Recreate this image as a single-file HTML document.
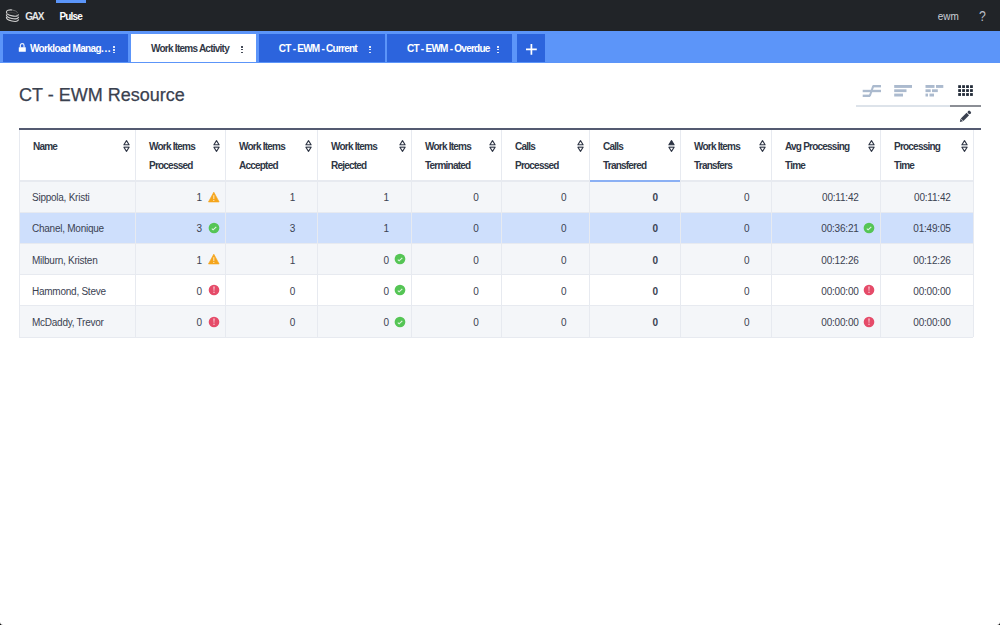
<!DOCTYPE html><html><head><meta charset="utf-8"><style>
html,body{margin:0;padding:0;width:1000px;height:625px;overflow:hidden;background:#fff;font-family:"Liberation Sans", sans-serif;}
.t{position:absolute;white-space:nowrap;}
.b{position:absolute;}
svg{position:absolute;}
</style></head><body>
<div class="b" style="left:0px;top:0px;width:1000.00px;height:31.25px;background:#212428;"></div>
<div class="b" style="left:56px;top:0px;width:30.00px;height:2.50px;background:#5b95f9;"></div>
<svg style="left:0;top:0" width="25" height="30" viewBox="0 0 25 30">
<g fill="none" stroke="#d0d0d0" stroke-width="1.1">
<g transform="rotate(12 12.5 13)">
<path d="M11.5 10.1 A6.2 2.9 0 1 0 18.7 13"/>
<path d="M11.5 10.1 A6.2 2.9 0 0 1 17.5 11.6" stroke="#6a6a6a" stroke-width="0.9"/>
</g>
<g transform="translate(0 2.6)"><g transform="rotate(12 12.5 13)">
<path d="M6.3 13 A6.2 2.9 0 0 1 18.7 13" stroke="#4a4a4a" stroke-width="0.6"/>
<path d="M6.3 13 A6.2 2.9 0 0 0 18.7 13"/></g></g>
<g transform="translate(0 5.2)"><g transform="rotate(12 12.5 13)">
<path d="M6.3 13 A6.2 2.9 0 0 0 18.7 13"/></g></g>
</g></svg>
<div class="t" style="left:25.20px;top:11.54px;font-size:10px;line-height:10px;font-weight:bold;color:#e6e6e6;letter-spacing:-1.25px;">GAX</div>
<div class="t" style="left:59.40px;top:11.73px;font-size:10px;line-height:10px;font-weight:bold;color:#ffffff;letter-spacing:-0.8px;">Pulse</div>
<div class="t" style="left:937.80px;top:12.34px;font-size:10px;line-height:10px;font-weight:normal;color:#c9ced6;">ewm</div>
<div class="t" style="left:978.60px;top:8.20px;font-size:15px;line-height:15px;font-weight:normal;color:#b9bec7;transform:scaleX(0.82);transform-origin:0 0;">?</div>
<div class="b" style="left:0px;top:31.25px;width:1000.00px;height:31.25px;background:#5c95f9;"></div>
<div class="b" style="left:3px;top:34px;width:125.00px;height:28.20px;background:#2c64dd;"></div>
<div class="b" style="left:131px;top:34px;width:125.00px;height:28.20px;background:#ffffff;"></div>
<div class="b" style="left:259px;top:34px;width:125.50px;height:28.20px;background:#2c64dd;"></div>
<div class="b" style="left:387px;top:34px;width:125.00px;height:28.20px;background:#2c64dd;"></div>
<div class="b" style="left:517px;top:34px;width:28.00px;height:28.20px;background:#2c64dd;"></div>
<svg style="left:18px;top:42px" width="9" height="11" viewBox="0 0 9 11">
<path d="M2.35 5.4 V3.5 A1.85 1.85 0 0 1 6.05 3.5 V5.4" fill="none" stroke="rgba(255,255,255,0.9)" stroke-width="1.2"/>
<rect x="0.8" y="5.2" width="7" height="4.6" rx="0.4" fill="#fff"/></svg>
<div class="t" style="left:29.90px;top:43.53px;font-size:10px;line-height:10px;font-weight:bold;color:#ffffff;letter-spacing:-0.62px;">Workload Manag<span style="letter-spacing:0.6px">...</span></div>
<div class="b" style="left:113.45px;top:46.3px;width:1.50px;height:1.50px;background:rgba(255,255,255,0.85);"></div>
<div class="b" style="left:113.45px;top:49.05px;width:1.50px;height:1.50px;background:rgba(255,255,255,0.85);"></div>
<div class="b" style="left:113.45px;top:51.8px;width:1.50px;height:1.50px;background:rgba(255,255,255,0.85);"></div>
<div class="t" style="left:151.00px;top:43.73px;font-size:10px;line-height:10px;font-weight:bold;color:#323846;letter-spacing:-0.75px;">Work Items Activity</div>
<div class="b" style="left:241.25px;top:46.0px;width:1.50px;height:1.50px;background:rgba(50,56,70,0.9);"></div>
<div class="b" style="left:241.25px;top:48.75px;width:1.50px;height:1.50px;background:rgba(50,56,70,0.9);"></div>
<div class="b" style="left:241.25px;top:51.5px;width:1.50px;height:1.50px;background:rgba(50,56,70,0.9);"></div>
<div class="t" style="left:278.80px;top:43.64px;font-size:10px;line-height:10px;font-weight:bold;color:#ffffff;letter-spacing:-0.75px;">CT - EWM - Current</div>
<div class="b" style="left:369.45px;top:46.2px;width:1.50px;height:1.50px;background:rgba(255,255,255,0.85);"></div>
<div class="b" style="left:369.45px;top:48.95px;width:1.50px;height:1.50px;background:rgba(255,255,255,0.85);"></div>
<div class="b" style="left:369.45px;top:51.7px;width:1.50px;height:1.50px;background:rgba(255,255,255,0.85);"></div>
<div class="t" style="left:407.00px;top:43.64px;font-size:10px;line-height:10px;font-weight:bold;color:#ffffff;letter-spacing:-0.75px;">CT - EWM - Overdue</div>
<div class="b" style="left:497.45px;top:46.2px;width:1.50px;height:1.50px;background:rgba(255,255,255,0.85);"></div>
<div class="b" style="left:497.45px;top:48.95px;width:1.50px;height:1.50px;background:rgba(255,255,255,0.85);"></div>
<div class="b" style="left:497.45px;top:51.7px;width:1.50px;height:1.50px;background:rgba(255,255,255,0.85);"></div>
<svg style="left:520px;top:40px" width="20" height="20" viewBox="520 40 20 20"><path d="M526 49.3 H536.8 M531.4 44 V54.7" stroke="#fff" stroke-width="1.7"/></svg>
<div class="t" style="left:19.00px;top:86.06px;font-size:18px;line-height:18px;font-weight:normal;color:#3a414f;-webkit-text-stroke:0.25px #3a414f;">CT - EWM Resource</div>
<svg style="left:850px;top:80px" width="135" height="20" viewBox="850 80 135 20">
<g stroke="#abbace" stroke-width="2.4" fill="none" stroke-linecap="butt">
<path d="M872.6 86.2 H881"/><path d="M862.7 91 H881"/><path d="M862.7 95.8 H870.2"/><path d="M869.8 95.8 L873.2 86.2" stroke-width="2"/>
</g>
<g fill="#abbace">
<rect x="894.2" y="85" width="17.8" height="2.9"/><rect x="894.2" y="89.3" width="12.3" height="2.8"/><rect x="894.2" y="93.6" width="8.8" height="2.9"/>
<rect x="925.5" y="85" width="9" height="2.9"/><rect x="936" y="85" width="7.3" height="2.9"/>
<rect x="925.5" y="89.3" width="5.2" height="2.8"/><rect x="932" y="89.3" width="5.8" height="2.8"/>
<rect x="925.5" y="93.6" width="2.5" height="2.9"/><rect x="929.5" y="93.6" width="4.5" height="2.9"/>
</g>
<g fill="#222b38">
<rect x="958.20" y="85.20" width="2.8" height="2.8"/><rect x="962.15" y="85.20" width="2.8" height="2.8"/><rect x="966.10" y="85.20" width="2.8" height="2.8"/><rect x="970.05" y="85.20" width="2.8" height="2.8"/><rect x="958.20" y="89.15" width="2.8" height="2.8"/><rect x="962.15" y="89.15" width="2.8" height="2.8"/><rect x="966.10" y="89.15" width="2.8" height="2.8"/><rect x="970.05" y="89.15" width="2.8" height="2.8"/><rect x="958.20" y="93.10" width="2.8" height="2.8"/><rect x="962.15" y="93.10" width="2.8" height="2.8"/><rect x="966.10" y="93.10" width="2.8" height="2.8"/><rect x="970.05" y="93.10" width="2.8" height="2.8"/>
</g></svg>
<div class="b" style="left:856px;top:105px;width:94.00px;height:1.60px;background:#dde3ea;"></div>
<div class="b" style="left:950px;top:105px;width:31.00px;height:1.60px;background:#8b8e95;"></div>
<svg style="left:950px;top:105px" width="30" height="22" viewBox="950 105 30 22">
<g transform="translate(959.9 121.9) rotate(-45)" fill="#3a4150">
<path d="M0 0 L2.6 -1.75 L2.6 1.75 Z"/>
<rect x="3.1" y="-1.8" width="8.1" height="3.6"/>
<rect x="11.9" y="-1.8" width="2.9" height="3.6" rx="1.3"/>
</g></svg>
<div class="b" style="left:19px;top:128px;width:962.00px;height:2.00px;background:#545a71;"></div>
<div class="b" style="left:19px;top:180.5px;width:954.00px;height:31.32px;background:#f4f6f9;"></div>
<div class="b" style="left:19px;top:211.82px;width:954.00px;height:31.32px;background:#cedffc;"></div>
<div class="b" style="left:19px;top:243.14px;width:954.00px;height:31.32px;background:#f4f6f9;"></div>
<div class="b" style="left:19px;top:274.46000000000004px;width:954.00px;height:31.32px;background:#ffffff;"></div>
<div class="b" style="left:19px;top:305.78px;width:954.00px;height:31.32px;background:#f4f6f9;"></div>
<div class="b" style="left:19px;top:180px;width:954.00px;height:1.60px;background:#e7eaf0;"></div>
<div class="b" style="left:19px;top:211.51999999999998px;width:954.00px;height:1.00px;background:#e7eaf0;"></div>
<div class="b" style="left:19px;top:242.83999999999997px;width:954.00px;height:1.00px;background:#e7eaf0;"></div>
<div class="b" style="left:19px;top:274.16px;width:954.00px;height:1.00px;background:#e7eaf0;"></div>
<div class="b" style="left:19px;top:305.47999999999996px;width:954.00px;height:1.00px;background:#e7eaf0;"></div>
<div class="b" style="left:19px;top:336.8px;width:954.00px;height:1.00px;background:#e7eaf0;"></div>
<div class="b" style="left:19px;top:130px;width:1.00px;height:207.10px;background:#e7eaf0;"></div>
<div class="b" style="left:135px;top:130px;width:1.00px;height:207.10px;background:#e7eaf0;"></div>
<div class="b" style="left:225px;top:130px;width:1.00px;height:207.10px;background:#e7eaf0;"></div>
<div class="b" style="left:317px;top:130px;width:1.00px;height:207.10px;background:#e7eaf0;"></div>
<div class="b" style="left:411px;top:130px;width:1.00px;height:207.10px;background:#e7eaf0;"></div>
<div class="b" style="left:501px;top:130px;width:1.00px;height:207.10px;background:#e7eaf0;"></div>
<div class="b" style="left:589px;top:130px;width:1.00px;height:207.10px;background:#e7eaf0;"></div>
<div class="b" style="left:680px;top:130px;width:1.00px;height:207.10px;background:#e7eaf0;"></div>
<div class="b" style="left:771px;top:130px;width:1.00px;height:207.10px;background:#e7eaf0;"></div>
<div class="b" style="left:880px;top:130px;width:1.00px;height:207.10px;background:#e7eaf0;"></div>
<div class="b" style="left:973px;top:130px;width:1.00px;height:207.10px;background:#e7eaf0;"></div>
<div class="b" style="left:589.5px;top:180px;width:90.50px;height:1.50px;background:#8bb0f4;"></div>
<div class="t" style="left:33.00px;top:141.53px;font-size:10px;line-height:10px;font-weight:bold;color:#2f3645;letter-spacing:-0.78px;">Name</div>
<svg style="left:123.4px;top:140px" width="7" height="12" viewBox="0 0 7 12">
<path d="M3.5 0.6 L6.1 4.7 H0.9 Z" fill="none" stroke="#2f3645" stroke-width="1.1" stroke-linejoin="round"/>
<rect x="0.6" y="5.4" width="5.8" height="1.2" fill="#c0c3ca"/>
<path d="M3.5 11.4 L6.1 7.3 H0.9 Z" fill="none" stroke="#2f3645" stroke-width="1.1" stroke-linejoin="round"/>
</svg>
<div class="t" style="left:149.00px;top:141.53px;font-size:10px;line-height:10px;font-weight:bold;color:#2f3645;letter-spacing:-0.78px;">Work Items</div>
<div class="t" style="left:149.00px;top:161.13px;font-size:10px;line-height:10px;font-weight:bold;color:#2f3645;letter-spacing:-0.78px;">Processed</div>
<svg style="left:213.4px;top:140px" width="7" height="12" viewBox="0 0 7 12">
<path d="M3.5 0.6 L6.1 4.7 H0.9 Z" fill="none" stroke="#2f3645" stroke-width="1.1" stroke-linejoin="round"/>
<rect x="0.6" y="5.4" width="5.8" height="1.2" fill="#c0c3ca"/>
<path d="M3.5 11.4 L6.1 7.3 H0.9 Z" fill="none" stroke="#2f3645" stroke-width="1.1" stroke-linejoin="round"/>
</svg>
<div class="t" style="left:239.00px;top:141.53px;font-size:10px;line-height:10px;font-weight:bold;color:#2f3645;letter-spacing:-0.78px;">Work Items</div>
<div class="t" style="left:239.00px;top:161.13px;font-size:10px;line-height:10px;font-weight:bold;color:#2f3645;letter-spacing:-0.78px;">Accepted</div>
<svg style="left:305.4px;top:140px" width="7" height="12" viewBox="0 0 7 12">
<path d="M3.5 0.6 L6.1 4.7 H0.9 Z" fill="none" stroke="#2f3645" stroke-width="1.1" stroke-linejoin="round"/>
<rect x="0.6" y="5.4" width="5.8" height="1.2" fill="#c0c3ca"/>
<path d="M3.5 11.4 L6.1 7.3 H0.9 Z" fill="none" stroke="#2f3645" stroke-width="1.1" stroke-linejoin="round"/>
</svg>
<div class="t" style="left:331.00px;top:141.53px;font-size:10px;line-height:10px;font-weight:bold;color:#2f3645;letter-spacing:-0.78px;">Work Items</div>
<div class="t" style="left:331.00px;top:161.13px;font-size:10px;line-height:10px;font-weight:bold;color:#2f3645;letter-spacing:-0.78px;">Rejected</div>
<svg style="left:399.4px;top:140px" width="7" height="12" viewBox="0 0 7 12">
<path d="M3.5 0.6 L6.1 4.7 H0.9 Z" fill="none" stroke="#2f3645" stroke-width="1.1" stroke-linejoin="round"/>
<rect x="0.6" y="5.4" width="5.8" height="1.2" fill="#c0c3ca"/>
<path d="M3.5 11.4 L6.1 7.3 H0.9 Z" fill="none" stroke="#2f3645" stroke-width="1.1" stroke-linejoin="round"/>
</svg>
<div class="t" style="left:425.00px;top:141.53px;font-size:10px;line-height:10px;font-weight:bold;color:#2f3645;letter-spacing:-0.78px;">Work Items</div>
<div class="t" style="left:425.00px;top:161.13px;font-size:10px;line-height:10px;font-weight:bold;color:#2f3645;letter-spacing:-0.78px;">Terminated</div>
<svg style="left:489.4px;top:140px" width="7" height="12" viewBox="0 0 7 12">
<path d="M3.5 0.6 L6.1 4.7 H0.9 Z" fill="none" stroke="#2f3645" stroke-width="1.1" stroke-linejoin="round"/>
<rect x="0.6" y="5.4" width="5.8" height="1.2" fill="#c0c3ca"/>
<path d="M3.5 11.4 L6.1 7.3 H0.9 Z" fill="none" stroke="#2f3645" stroke-width="1.1" stroke-linejoin="round"/>
</svg>
<div class="t" style="left:515.00px;top:141.53px;font-size:10px;line-height:10px;font-weight:bold;color:#2f3645;letter-spacing:-0.78px;">Calls</div>
<div class="t" style="left:515.00px;top:161.13px;font-size:10px;line-height:10px;font-weight:bold;color:#2f3645;letter-spacing:-0.78px;">Processed</div>
<svg style="left:577.4px;top:140px" width="7" height="12" viewBox="0 0 7 12">
<path d="M3.5 0.6 L6.1 4.7 H0.9 Z" fill="none" stroke="#2f3645" stroke-width="1.1" stroke-linejoin="round"/>
<rect x="0.6" y="5.4" width="5.8" height="1.2" fill="#c0c3ca"/>
<path d="M3.5 11.4 L6.1 7.3 H0.9 Z" fill="none" stroke="#2f3645" stroke-width="1.1" stroke-linejoin="round"/>
</svg>
<div class="t" style="left:603.00px;top:141.53px;font-size:10px;line-height:10px;font-weight:bold;color:#2f3645;letter-spacing:-0.78px;">Calls</div>
<div class="t" style="left:603.00px;top:161.13px;font-size:10px;line-height:10px;font-weight:bold;color:#2f3645;letter-spacing:-0.78px;">Transfered</div>
<svg style="left:668.4px;top:140px" width="7" height="12" viewBox="0 0 7 12">
<path d="M3.5 0.6 L6.1 4.7 H0.9 Z" fill="#2f3645" stroke="#2f3645" stroke-width="1.1" stroke-linejoin="round"/>
<rect x="0.6" y="5.4" width="5.8" height="1.2" fill="#c0c3ca"/>
<path d="M3.5 11.4 L6.1 7.3 H0.9 Z" fill="none" stroke="#2f3645" stroke-width="1.1" stroke-linejoin="round"/>
</svg>
<div class="t" style="left:694.00px;top:141.53px;font-size:10px;line-height:10px;font-weight:bold;color:#2f3645;letter-spacing:-0.78px;">Work Items</div>
<div class="t" style="left:694.00px;top:161.13px;font-size:10px;line-height:10px;font-weight:bold;color:#2f3645;letter-spacing:-0.78px;">Transfers</div>
<svg style="left:759.4px;top:140px" width="7" height="12" viewBox="0 0 7 12">
<path d="M3.5 0.6 L6.1 4.7 H0.9 Z" fill="none" stroke="#2f3645" stroke-width="1.1" stroke-linejoin="round"/>
<rect x="0.6" y="5.4" width="5.8" height="1.2" fill="#c0c3ca"/>
<path d="M3.5 11.4 L6.1 7.3 H0.9 Z" fill="none" stroke="#2f3645" stroke-width="1.1" stroke-linejoin="round"/>
</svg>
<div class="t" style="left:785.00px;top:141.53px;font-size:10px;line-height:10px;font-weight:bold;color:#2f3645;letter-spacing:-0.78px;">Avg Processing</div>
<div class="t" style="left:785.00px;top:161.13px;font-size:10px;line-height:10px;font-weight:bold;color:#2f3645;letter-spacing:-0.78px;">Time</div>
<svg style="left:868.4px;top:140px" width="7" height="12" viewBox="0 0 7 12">
<path d="M3.5 0.6 L6.1 4.7 H0.9 Z" fill="none" stroke="#2f3645" stroke-width="1.1" stroke-linejoin="round"/>
<rect x="0.6" y="5.4" width="5.8" height="1.2" fill="#c0c3ca"/>
<path d="M3.5 11.4 L6.1 7.3 H0.9 Z" fill="none" stroke="#2f3645" stroke-width="1.1" stroke-linejoin="round"/>
</svg>
<div class="t" style="left:894.00px;top:141.53px;font-size:10px;line-height:10px;font-weight:bold;color:#2f3645;letter-spacing:-0.78px;">Processing</div>
<div class="t" style="left:894.00px;top:161.13px;font-size:10px;line-height:10px;font-weight:bold;color:#2f3645;letter-spacing:-0.78px;">Time</div>
<svg style="left:961.4px;top:140px" width="7" height="12" viewBox="0 0 7 12">
<path d="M3.5 0.6 L6.1 4.7 H0.9 Z" fill="none" stroke="#2f3645" stroke-width="1.1" stroke-linejoin="round"/>
<rect x="0.6" y="5.4" width="5.8" height="1.2" fill="#c0c3ca"/>
<path d="M3.5 11.4 L6.1 7.3 H0.9 Z" fill="none" stroke="#2f3645" stroke-width="1.1" stroke-linejoin="round"/>
</svg>
<div class="t" style="left:32.00px;top:192.94px;font-size:10px;line-height:10px;font-weight:normal;color:#3b4252;letter-spacing:-0.25px;">Sippola, Kristi</div>
<div class="t" style="right:798.00px;top:192.94px;font-size:10px;line-height:10px;font-weight:normal;color:#3b4252;">1</div>
<svg style="left:207.50px;top:190.50px" width="12" height="12" viewBox="0 0 12 12">
<path d="M5.8 1.2 L11.1 10.9 H0.5 Z" fill="#f5a51c" stroke="#f5a51c" stroke-width="0.7" stroke-linejoin="round"/>
<path d="M5.8 4.3 V8.1" stroke="#fde7bf" stroke-width="1.05"/><rect x="5.25" y="8.9" width="1.1" height="1.1" fill="#fde7bf"/></svg>
<div class="t" style="right:704.80px;top:192.94px;font-size:10px;line-height:10px;font-weight:normal;color:#3b4252;">1</div>
<div class="t" style="right:611.00px;top:192.94px;font-size:10px;line-height:10px;font-weight:normal;color:#3b4252;">1</div>
<div class="t" style="right:521.20px;top:192.94px;font-size:10px;line-height:10px;font-weight:normal;color:#3b4252;">0</div>
<div class="t" style="right:433.50px;top:192.94px;font-size:10px;line-height:10px;font-weight:normal;color:#3b4252;">0</div>
<div class="t" style="right:342.00px;top:192.94px;font-size:10px;line-height:10px;font-weight:bold;color:#3b4252;">0</div>
<div class="t" style="right:250.50px;top:192.94px;font-size:10px;line-height:10px;font-weight:normal;color:#3b4252;">0</div>
<div class="t" style="right:141.40px;top:192.94px;font-size:10px;line-height:10px;font-weight:normal;color:#3b4252;letter-spacing:-0.2px;">00:11:42</div>
<div class="t" style="right:49.40px;top:192.94px;font-size:10px;line-height:10px;font-weight:normal;color:#3b4252;letter-spacing:-0.2px;">00:11:42</div>
<div class="t" style="left:32.00px;top:224.25px;font-size:10px;line-height:10px;font-weight:normal;color:#3b4252;letter-spacing:-0.25px;">Chanel, Monique</div>
<div class="t" style="right:798.00px;top:224.25px;font-size:10px;line-height:10px;font-weight:normal;color:#3b4252;">3</div>
<svg style="left:207.55px;top:221.62px" width="12" height="12" viewBox="0 0 12 12">
<circle cx="6" cy="6" r="5.35" fill="#55c555"/><path d="M3.8 6.7 L5.1 7.8 L8.3 4.8" fill="none" stroke="#e2f5e2" stroke-width="1.1"/></svg>
<div class="t" style="right:704.80px;top:224.25px;font-size:10px;line-height:10px;font-weight:normal;color:#3b4252;">3</div>
<div class="t" style="right:611.00px;top:224.25px;font-size:10px;line-height:10px;font-weight:normal;color:#3b4252;">1</div>
<div class="t" style="right:521.20px;top:224.25px;font-size:10px;line-height:10px;font-weight:normal;color:#3b4252;">0</div>
<div class="t" style="right:433.50px;top:224.25px;font-size:10px;line-height:10px;font-weight:normal;color:#3b4252;">0</div>
<div class="t" style="right:342.00px;top:224.25px;font-size:10px;line-height:10px;font-weight:bold;color:#3b4252;">0</div>
<div class="t" style="right:250.50px;top:224.25px;font-size:10px;line-height:10px;font-weight:normal;color:#3b4252;">0</div>
<div class="t" style="right:141.40px;top:224.25px;font-size:10px;line-height:10px;font-weight:normal;color:#3b4252;letter-spacing:-0.2px;">00:36:21</div>
<svg style="left:862.55px;top:221.62px" width="12" height="12" viewBox="0 0 12 12">
<circle cx="6" cy="6" r="5.35" fill="#55c555"/><path d="M3.8 6.7 L5.1 7.8 L8.3 4.8" fill="none" stroke="#e2f5e2" stroke-width="1.1"/></svg>
<div class="t" style="right:49.40px;top:224.25px;font-size:10px;line-height:10px;font-weight:normal;color:#3b4252;letter-spacing:-0.2px;">01:49:05</div>
<div class="t" style="left:32.00px;top:255.58px;font-size:10px;line-height:10px;font-weight:normal;color:#3b4252;letter-spacing:-0.25px;">Milburn, Kristen</div>
<div class="t" style="right:798.00px;top:255.58px;font-size:10px;line-height:10px;font-weight:normal;color:#3b4252;">1</div>
<svg style="left:207.50px;top:253.14px" width="12" height="12" viewBox="0 0 12 12">
<path d="M5.8 1.2 L11.1 10.9 H0.5 Z" fill="#f5a51c" stroke="#f5a51c" stroke-width="0.7" stroke-linejoin="round"/>
<path d="M5.8 4.3 V8.1" stroke="#fde7bf" stroke-width="1.05"/><rect x="5.25" y="8.9" width="1.1" height="1.1" fill="#fde7bf"/></svg>
<div class="t" style="right:704.80px;top:255.58px;font-size:10px;line-height:10px;font-weight:normal;color:#3b4252;">1</div>
<div class="t" style="right:611.00px;top:255.58px;font-size:10px;line-height:10px;font-weight:normal;color:#3b4252;">0</div>
<svg style="left:393.55px;top:252.94px" width="12" height="12" viewBox="0 0 12 12">
<circle cx="6" cy="6" r="5.35" fill="#55c555"/><path d="M3.8 6.7 L5.1 7.8 L8.3 4.8" fill="none" stroke="#e2f5e2" stroke-width="1.1"/></svg>
<div class="t" style="right:521.20px;top:255.58px;font-size:10px;line-height:10px;font-weight:normal;color:#3b4252;">0</div>
<div class="t" style="right:433.50px;top:255.58px;font-size:10px;line-height:10px;font-weight:normal;color:#3b4252;">0</div>
<div class="t" style="right:342.00px;top:255.58px;font-size:10px;line-height:10px;font-weight:bold;color:#3b4252;">0</div>
<div class="t" style="right:250.50px;top:255.58px;font-size:10px;line-height:10px;font-weight:normal;color:#3b4252;">0</div>
<div class="t" style="right:141.40px;top:255.58px;font-size:10px;line-height:10px;font-weight:normal;color:#3b4252;letter-spacing:-0.2px;">00:12:26</div>
<div class="t" style="right:49.40px;top:255.58px;font-size:10px;line-height:10px;font-weight:normal;color:#3b4252;letter-spacing:-0.2px;">00:12:26</div>
<div class="t" style="left:32.00px;top:286.90px;font-size:10px;line-height:10px;font-weight:normal;color:#3b4252;letter-spacing:-0.25px;">Hammond, Steve</div>
<div class="t" style="right:798.00px;top:286.90px;font-size:10px;line-height:10px;font-weight:normal;color:#3b4252;">0</div>
<svg style="left:207.55px;top:284.26px" width="12" height="12" viewBox="0 0 12 12">
<circle cx="6" cy="6" r="5.3" fill="#e54b69"/><path d="M5.4 2.6 H6.6 L6.25 6.9 H5.75 Z" fill="#fbe3e8"/><rect x="5.45" y="7.7" width="1.1" height="1.2" fill="#fbe3e8"/></svg>
<div class="t" style="right:704.80px;top:286.90px;font-size:10px;line-height:10px;font-weight:normal;color:#3b4252;">0</div>
<div class="t" style="right:611.00px;top:286.90px;font-size:10px;line-height:10px;font-weight:normal;color:#3b4252;">0</div>
<svg style="left:393.55px;top:284.26px" width="12" height="12" viewBox="0 0 12 12">
<circle cx="6" cy="6" r="5.35" fill="#55c555"/><path d="M3.8 6.7 L5.1 7.8 L8.3 4.8" fill="none" stroke="#e2f5e2" stroke-width="1.1"/></svg>
<div class="t" style="right:521.20px;top:286.90px;font-size:10px;line-height:10px;font-weight:normal;color:#3b4252;">0</div>
<div class="t" style="right:433.50px;top:286.90px;font-size:10px;line-height:10px;font-weight:normal;color:#3b4252;">0</div>
<div class="t" style="right:342.00px;top:286.90px;font-size:10px;line-height:10px;font-weight:bold;color:#3b4252;">0</div>
<div class="t" style="right:250.50px;top:286.90px;font-size:10px;line-height:10px;font-weight:normal;color:#3b4252;">0</div>
<div class="t" style="right:141.40px;top:286.90px;font-size:10px;line-height:10px;font-weight:normal;color:#3b4252;letter-spacing:-0.2px;">00:00:00</div>
<svg style="left:862.55px;top:284.26px" width="12" height="12" viewBox="0 0 12 12">
<circle cx="6" cy="6" r="5.3" fill="#e54b69"/><path d="M5.4 2.6 H6.6 L6.25 6.9 H5.75 Z" fill="#fbe3e8"/><rect x="5.45" y="7.7" width="1.1" height="1.2" fill="#fbe3e8"/></svg>
<div class="t" style="right:49.40px;top:286.90px;font-size:10px;line-height:10px;font-weight:normal;color:#3b4252;letter-spacing:-0.2px;">00:00:00</div>
<div class="t" style="left:32.00px;top:318.22px;font-size:10px;line-height:10px;font-weight:normal;color:#3b4252;letter-spacing:-0.25px;">McDaddy, Trevor</div>
<div class="t" style="right:798.00px;top:318.22px;font-size:10px;line-height:10px;font-weight:normal;color:#3b4252;">0</div>
<svg style="left:207.55px;top:315.58px" width="12" height="12" viewBox="0 0 12 12">
<circle cx="6" cy="6" r="5.3" fill="#e54b69"/><path d="M5.4 2.6 H6.6 L6.25 6.9 H5.75 Z" fill="#fbe3e8"/><rect x="5.45" y="7.7" width="1.1" height="1.2" fill="#fbe3e8"/></svg>
<div class="t" style="right:704.80px;top:318.22px;font-size:10px;line-height:10px;font-weight:normal;color:#3b4252;">0</div>
<div class="t" style="right:611.00px;top:318.22px;font-size:10px;line-height:10px;font-weight:normal;color:#3b4252;">0</div>
<svg style="left:393.55px;top:315.58px" width="12" height="12" viewBox="0 0 12 12">
<circle cx="6" cy="6" r="5.35" fill="#55c555"/><path d="M3.8 6.7 L5.1 7.8 L8.3 4.8" fill="none" stroke="#e2f5e2" stroke-width="1.1"/></svg>
<div class="t" style="right:521.20px;top:318.22px;font-size:10px;line-height:10px;font-weight:normal;color:#3b4252;">0</div>
<div class="t" style="right:433.50px;top:318.22px;font-size:10px;line-height:10px;font-weight:normal;color:#3b4252;">0</div>
<div class="t" style="right:342.00px;top:318.22px;font-size:10px;line-height:10px;font-weight:bold;color:#3b4252;">0</div>
<div class="t" style="right:250.50px;top:318.22px;font-size:10px;line-height:10px;font-weight:normal;color:#3b4252;">0</div>
<div class="t" style="right:141.40px;top:318.22px;font-size:10px;line-height:10px;font-weight:normal;color:#3b4252;letter-spacing:-0.2px;">00:00:00</div>
<svg style="left:862.55px;top:315.58px" width="12" height="12" viewBox="0 0 12 12">
<circle cx="6" cy="6" r="5.3" fill="#e54b69"/><path d="M5.4 2.6 H6.6 L6.25 6.9 H5.75 Z" fill="#fbe3e8"/><rect x="5.45" y="7.7" width="1.1" height="1.2" fill="#fbe3e8"/></svg>
<div class="t" style="right:49.40px;top:318.22px;font-size:10px;line-height:10px;font-weight:normal;color:#3b4252;letter-spacing:-0.2px;">00:00:00</div>
<svg style="left:0;top:622px" width="3" height="3" viewBox="0 0 3 3"><path d="M0 0 V3 H3 A3 3 0 0 1 0 0 Z" fill="#000"/></svg>
<svg style="left:997px;top:622px" width="3" height="3" viewBox="0 0 3 3"><path d="M3 0 V3 H0 A3 3 0 0 0 3 0 Z" fill="#000"/></svg>
</body></html>
